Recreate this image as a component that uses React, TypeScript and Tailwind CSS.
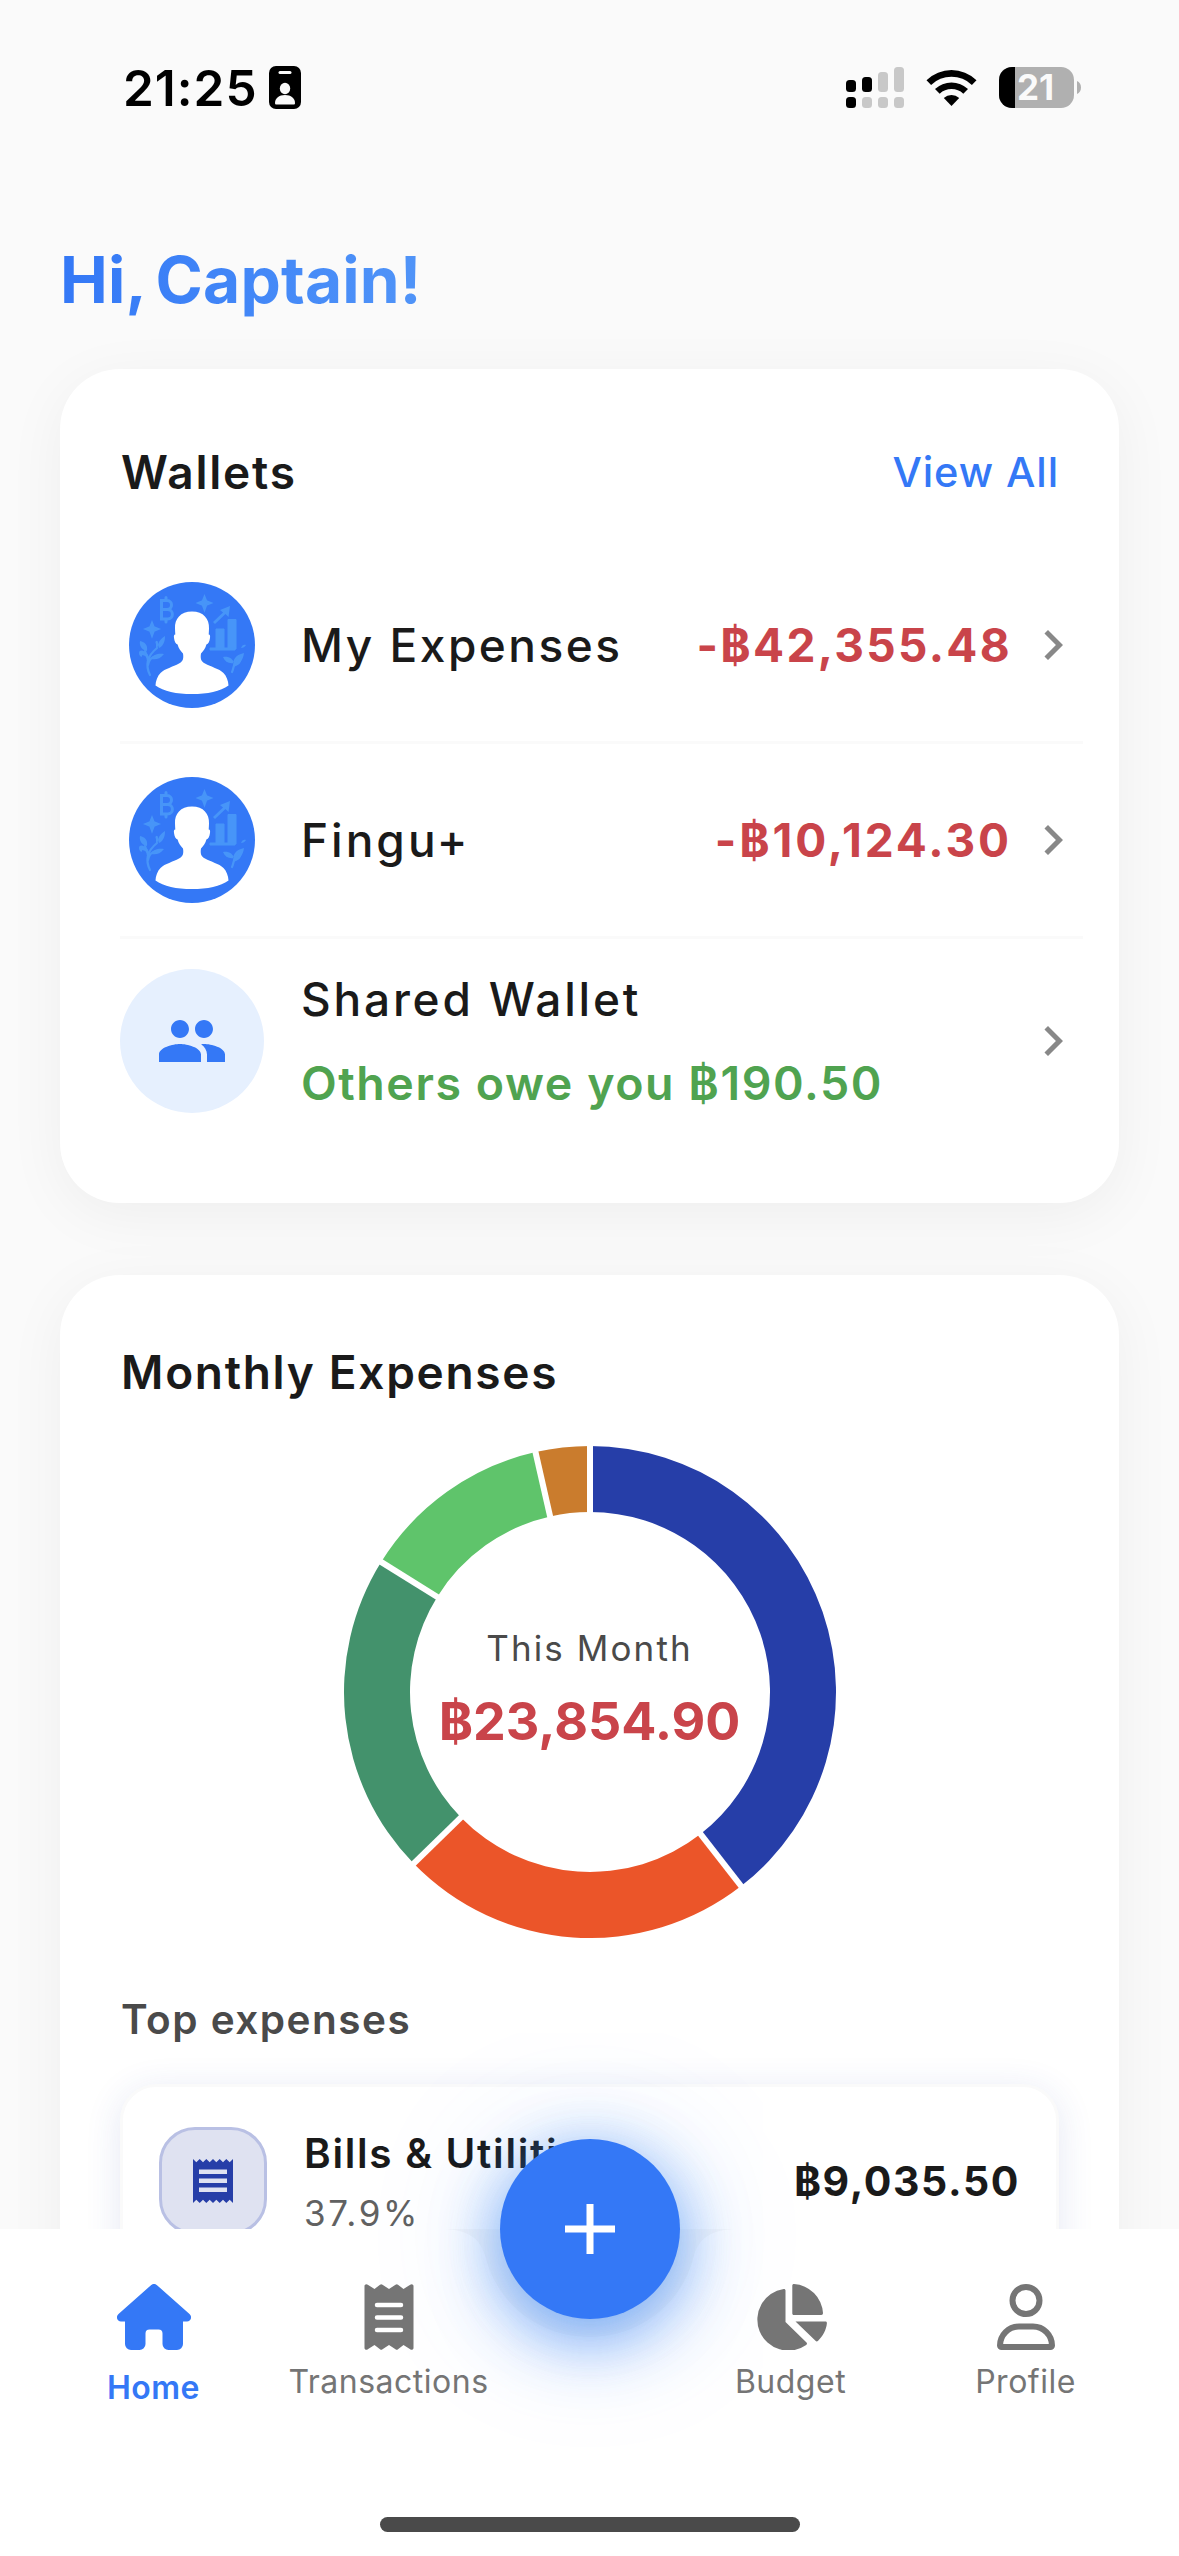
import clsx from "clsx";
import { MdChevronRight, MdPeople } from "react-icons/md";

const SEGMENTS = [
	{ color: "#263ea8", from: 0, to: 142.1 },
	{ color: "#eb5529", from: 142.1, to: 225.8 },
	{ color: "#43926c", from: 225.8, to: 301.9 },
	{ color: "#5fc46b", from: 301.9, to: 347.2 },
	{ color: "#ca7c2d", from: 347.2, to: 360 },
];

const WALLETS = [
	{ name: "My Expenses", amount: "-฿42,355.48", nameTracking: "tracking-[2.5px]", amountTracking: "tracking-[2.3px]" },
	{ name: "Fingu+", amount: "-฿10,124.30", nameTracking: "tracking-[3px]", amountTracking: "tracking-[2.9px]" },
];

// point on a circle of radius r, angle measured clockwise from the top
function point(r: number, deg: number) {
	const a = (deg * Math.PI) / 180;
	return `${246 + r * Math.sin(a)} ${246 - r * Math.cos(a)}`;
}

function segmentPath(from: number, to: number) {
	const large = to - from > 180 ? 1 : 0;
	return `M${point(246, from)} A246 246 0 ${large} 1 ${point(246, to)} L${point(180, to)} A180 180 0 ${large} 0 ${point(180, from)} Z`;
}

function Donut() {
	return (
		<svg className="h-[492px] w-[492px]" viewBox="0 0 492 492">
			{SEGMENTS.map((s) => (
				<path key={s.color} d={segmentPath(s.from, s.to)} fill={s.color} />
			))}
			{SEGMENTS.map((s) => (
				<path
					key={s.color}
					d={`M${point(176, s.from)} L${point(250, s.from)}`}
					stroke="#fff"
					strokeWidth="6"
				/>
			))}
		</svg>
	);
}

function StatusBar() {
	return (
		<div className="flex h-[177px] items-start justify-between pl-[123px] pr-[98px] pt-[66px]">
			<div className="flex items-start">
				<span className="-mt-2 w-[146px] whitespace-nowrap text-[49.5px] font-semibold leading-[60px] tracking-[1px] text-black">
					21:25
				</span>
				<svg className="h-[43px] w-8" viewBox="0 0 32 43">
					<rect width="32" height="43" rx="7" />
					<rect x="9.5" y="5" width="13" height="3" rx="1.5" fill="#fafafa" />
					<ellipse cx="16" cy="22.5" rx="5.2" ry="5.8" fill="#fafafa" />
					<path d="M6 37c0-4.500 4-8 10-8s10 3.500 10 8c0 1-.5 1.500-1.500 1.500h-17C6.500 38.500 6 38 6 37z" fill="#fafafa" />
				</svg>
			</div>
			<div className="flex items-start">
				<svg className="mr-[22px] mt-px h-[42px] w-[58px]" viewBox="0 0 58 42">
					<rect y="13" width="10" height="12" rx="3.5" />
					<rect x="16" y="10" width="10" height="15" rx="3.5" />
					<rect x="32" y="5" width="10" height="20" rx="3.5" fill="#c8c8c8" />
					<rect x="48" width="10" height="25" rx="3.5" fill="#c8c8c8" />
					<rect y="30" width="10" height="11" rx="3.5" />
					<rect x="16" y="30" width="10" height="11" rx="3.5" fill="#c8c8c8" />
					<rect x="32" y="30" width="10" height="11" rx="3.5" fill="#c8c8c8" />
					<rect x="48" y="30" width="10" height="11" rx="3.5" fill="#c8c8c8" />
				</svg>
				<svg className="mr-[22px] mt-[3px] h-[37px] w-[51px]" viewBox="0 0 51 37">
					<path d="M0.5 11.200a36 36 0 0 1 50 0l-4.600 4.700a29.300 29.300 0 0 0-40.800 0z" />
					<path d="M9 20a24 24 0 0 1 33 0l-4.700 4.700a17.300 17.300 0 0 0-23.600 0z" />
					<path d="M17.800 29a11.500 11.500 0 0 1 15.400 0L25.500 37z" />
				</svg>
				<div className="mt-px flex items-center">
					<div className="flex h-[41px] w-[75px] items-center overflow-hidden rounded-[13px] bg-[#b0b0b0]">
						<div className="h-full w-4 shrink-0 bg-black" />
						<span className="pl-[2px] text-[35px] font-bold leading-[41px] text-[#fafafa]">21</span>
					</div>
					<svg className="ml-[3px] h-[13px] w-1" viewBox="0 0 4 13" fill="#b0b0b0">
						<path d="M0 0c2.500 1 4 3.500 4 6.500S2.500 12 0 13z" />
					</svg>
				</div>
			</div>
		</div>
	);
}

function Avatar() {
	return (
		<svg className="h-[126px] w-[126px]" viewBox="0 0 126 126">
			<circle cx="63" cy="63" r="63" fill="#3478f6" />
			<g fill="#4795f8">
				<path d="M75.500 14l2 5 5 2-5 2-2 5.500-2-5.500-5-2 5-2z" stroke="#4795f8" strokeWidth="1.5" />
				<path d="M23 40l2 5 5 2-5 2-2 5.500-2-5.500-5-2 5-2z" stroke="#4795f8" strokeWidth="1.5" />
				<path d="M81 66h25v2H81zM87 47h8v20h-8zM99 37.500h8V67h-8z" stroke="#4795f8" strokeWidth="1" />
				<path d="M101 24l-10 4 3 2.500L84 40l2 2 10.500-10 3 3z" />
				<path d="M11 59c5 1 8 4 7 10-5-1-8-5-7-10zM36 54c-6 4-8 8-6 12 4-2 6-6 6-12zM35 72c-5-1-11 0-13 5 5 1 9 0 13-5zM10 71c0-4 6-3 9 2 1 2 1 4 0 6-1-4-3-6-6-6 1 3-3 2-3-2zM27 62c-2-3 2-5 2-1 1 3-1 5-2 5z" />
				<path d="M115 71c-9 2-12 7-10 14 6-3 9-7 10-14zM94 75c6-1 10 2 11 6-5 1-9-1-11-6zM112 66c1-3 3-4 5-3-1 2-3 3-5 3z" />
			</g>
			<g fill="none" stroke="#4795f8" strokeWidth="2.2" strokeLinecap="round">
				<path d="M21 93c-4-8-4-18 7-27M19 83c1-6 4-8 8-9M16 69c1 4 3 5 3 10M103 90c2-4 1-7 4-10l5-6M106 83c3-1 6-3 5-6" />
				<path
					d="M32.500 18.500h5.500c6 0 6 9 0 9h-5.500zM32.500 27.500h6c6.500 0 6.500 9.500 0 9.500h-6zM37 15.500v3M37 37v3"
					strokeWidth="3"
				/>
			</g>
			<path
				d="M63 29.500c-11.500 0-17.500 7.500-17 17 0 2 .2 4 .3 6-1.600 0-1.600 2-1.200 4 .5 3 1.500 5.500 3.500 6 1 4 3 6.500 5.400 9 .8 5 0 8-4 10-6 3.500-14 5-18.500 9.500-3 3-4.800 8-5 12.500 8 6 21 8.500 36.500 8.500s28.500-2.500 36.500-8.500c-.2-4.500-2-9.500-5-12.500C90 86.500 82 85 76 81.500c-4-2-4.800-5-4-10 2.400-2.500 4.400-5 5.400-9 2-.5 3-3 3.500-6 .4-2 .4-4-1.200-4 .1-2 .3-4 .3-6 .5-9.500-5.500-17-17-17z"
				fill="#fff"
			/>
		</svg>
	);
}

function Wallets() {
	return (
		<section className="h-[834px] rounded-[60px] bg-white pl-[60px] pr-9 shadow-[0_12px_60px_rgba(0,0,0,0.05)]">
			<div className="flex h-[180px] items-start justify-between pl-px pr-6 pt-[73px]">
				<h2 className="text-[46px] font-semibold leading-[60px] tracking-[1.8px] text-[#1a1a1a]">Wallets</h2>
				<button
					type="button"
					className="text-[41.5px] font-medium leading-[60px] tracking-[0.9px] text-[#3478f6]"
				>
					View All
				</button>
			</div>
			{WALLETS.map((wallet) => (
				<div key={wallet.name} className="flex h-[195px] items-center border-b-[3px] border-[#fafafa] pl-[9px]">
					<Avatar />
					<span
						className={clsx(
							"ml-[46px] text-[46px] font-medium leading-[60px] text-[#1a1a1a]",
							wallet.nameTracking,
						)}
					>
						{wallet.name}
					</span>
					<span
						className={clsx(
							"ml-auto text-[46px] font-bold leading-[60px] text-[#c9444a]",
							wallet.amountTracking,
						)}
					>
						{wallet.amount}
					</span>
					<MdChevronRight className="ml-[11px] h-[60px] w-[60px] text-[#888888]" />
				</div>
			))}
			<div className="flex h-[204px] items-center">
				<div className="flex h-36 w-36 items-center justify-center rounded-full bg-[#e6f0fe]">
					<MdPeople className="h-[72px] w-[72px] text-[#3478f6]" />
				</div>
				<div className="ml-[37px] flex flex-col">
					<span className="text-[46px] font-medium leading-[84px] tracking-[2.8px] text-[#1a1a1a]">
						Shared Wallet
					</span>
					<span className="text-[46.5px] font-semibold leading-[84px] tracking-[1.55px] text-[#50a350]">
						Others owe you ฿190.50
					</span>
				</div>
				<MdChevronRight className="ml-auto h-[60px] w-[60px] text-[#888888]" />
			</div>
		</section>
	);
}

function ReceiptIcon() {
	return (
		<svg className="h-11 w-10" viewBox="0 0 40 44">
			<path
				d="M0 0l3.300 3.300L6.700 0 10 3.300 13.300 0l3.400 3.300L20 0l3.300 3.300L26.700 0 30 3.300 33.300 0l3.400 3.300L40 0v44l-3.300-3.300-3.400 3.300-3.300-3.300-3.300 3.300-3.400-3.300L20 44l-3.300-3.300-3.400 3.300L10 40.700 6.700 44l-3.400-3.300L0 44z"
				fill="#263ea8"
			/>
			<path d="M6 10.500h28v4.500H6zM6 19.500h28V24H6zM6 28.500h28V33H6z" fill="#dfe2f1" />
		</svg>
	);
}

function MonthlyExpenses() {
	return (
		<section className="h-[1200px] rounded-t-[60px] bg-white px-[60px] pt-[67px] shadow-[0_12px_60px_rgba(0,0,0,0.05)]">
			<h2 className="pl-px text-[46px] font-semibold leading-[60px] tracking-[1.7px] text-[#1a1a1a]">
				Monthly Expenses
			</h2>
			<div className="mt-11 grid place-items-center">
				<div className="col-start-1 row-start-1">
					<Donut />
				</div>
				<div className="col-start-1 row-start-1 flex flex-col items-center pb-2 text-center">
					<span className="text-[35px] leading-[60px] tracking-[2.1px] text-[#4a4a4a]">This Month</span>
					<span className="mt-2 text-[52px] font-bold leading-[72px] text-[#c9444a]">฿23,854.90</span>
				</div>
			</div>
			<h3 className="mt-[52px] pl-px text-[40.5px] font-semibold leading-[60px] tracking-[1.5px] text-[#4a4a4a]">
				Top expenses
			</h3>
			<div className="mt-[34px] flex h-[240px] items-start rounded-[36px] border-[3px] border-[#fafafa] bg-white px-9 pt-10 shadow-[0_6px_36px_rgba(38,62,168,0.12)]">
				<div className="flex h-[108px] w-[108px] items-center justify-center rounded-[36px] border-[3px] border-[#b9c0e4] bg-[#dfe2f1]">
					<ReceiptIcon />
				</div>
				<div className="ml-[37px] flex flex-col">
					<span className="text-[40.5px] font-semibold leading-[54px] tracking-[1.7px] text-[#1a1a1a]">
						Bills &amp; Utilities
					</span>
					<span className="mt-[5px] text-[35px] leading-[54px] tracking-[2.6px] text-[#616161]">37.9%</span>
				</div>
				<span className="ml-auto mt-[27px] text-[41px] font-bold leading-[54px] tracking-[1.6px] text-[#1a1a1a]">
					฿9,035.50
				</span>
			</div>
		</section>
	);
}

function BottomNav() {
	return (
		<nav className="absolute bottom-0 left-0 flex h-[327px] w-full flex-col justify-between pb-6">
			{/* bar background with the notch for the add button */}
			<svg className="absolute inset-0 h-[327px] w-[1179px]" viewBox="0 0 1179 327">
				<path d="M420 0h339v120H420z" fill="#f9f9f9" />
				<path
					d="M0 0h440c28 0 41 9 46 30 13 47 55 78 103.500 78s90.500-31 103.500-78c5-21 18-30 46-30h440v327H0z"
					fill="#fff"
				/>
			</svg>
			<button
				type="button"
				className="absolute -top-[90px] left-[499.5px] flex h-[180px] w-[180px] items-center justify-center rounded-full bg-[#3478f6] shadow-[0_24px_72px_rgba(52,120,246,0.4),0_12px_60px_rgba(52,145,240,0.42),0_6px_150px_rgba(52,120,246,0.16)]"
			>
				<svg className="h-[50px] w-[50px]" viewBox="0 0 50 50" stroke="#fff" strokeWidth="7">
					<path d="M25 0v50M0 25h50" />
				</svg>
			</button>
			<div className="relative flex px-9 pt-[55px] text-[32px] leading-[42px] tracking-[0.5px] text-[#757575]">
				<div className="flex w-[235px] flex-col items-center font-semibold text-[#3478f6]">
					<svg className="h-[66px] w-[74px]" viewBox="0 0 74 66" fill="currentColor">
						<path d="M34 1.200a4.500 4.500 0 0 1 6 0L72.500 30c3.200 3 1.200 7.500-2.500 7.500h-4V60a6 6 0 0 1-6 6H51.500a6 6 0 0 1-6-6V49.500a4 4 0 0 0-4-4h-9a4 4 0 0 0-4 4V60a6 6 0 0 1-6 6H14a6 6 0 0 1-6-6V37.500H4C.3 37.500-1.700 33 1.500 30z" />
					</svg>
					<span className="mt-[17px]">Home</span>
				</div>
				<div className="flex w-[235px] flex-col items-center">
					<svg className="h-[66px] w-[50px]" viewBox="0 0 50 66">
						<path
							d="M.5 2c0-1.700 2-2.500 3.300-1.300L10.500 5l5.500-4.300a2 2 0 0 1 2.500 0L25 5l6.500-4.300a2 2 0 0 1 2.500 0L39.500 5l6.700-4.300C47.500-.5 49.500.3 49.500 2v62c0 1.700-2 2.500-3.300 1.300L39.500 61 34 65.300a2 2 0 0 1-2.500 0L25 61l-6.500 4.300a2 2 0 0 1-2.500 0L10.500 61l-6.700 4.300C2.500 66.500.5 65.700.5 64z"
							fill="currentColor"
						/>
						<path d="M13 21h24M13 33.500h24M13 46h24" stroke="#fff" strokeWidth="4.5" strokeLinecap="round" />
					</svg>
					<span className="mt-[11px]">Transactions</span>
				</div>
				<div className="ml-[167px] flex w-[235px] flex-col items-center">
					<svg className="ml-[3px] h-[66px] w-[70px]" viewBox="0 0 70 66" fill="currentColor">
						<path d="M35.300 1.500c0-1 .8-1.500 1.700-1.500a31 31 0 0 1 29 29c0 1-.6 2-1.700 2h-27.500c-1 0-1.500-.7-1.500-1.500zM28.500 6.500V38l21 20.500c.8.800.6 1.800-.3 2.500A31 31 0 1 1 26.700 5c1-.1 1.800.5 1.800 1.500zM38.500 37.500h30c1 0 1.500.8 1.400 1.800-.6 6.500-4 13-9 17.600-.8.7-1.700.6-2.400-.1z" />
					</svg>
					<span className="mt-[11px]">Budget</span>
				</div>
				<div className="flex w-[235px] flex-col items-center">
					<svg className="h-[66px] w-[58px]" viewBox="0 0 58 66" fill="none" stroke="currentColor" strokeWidth="6">
						<circle cx="29" cy="16.5" r="13.5" />
						<path d="M3 61.500C3 51 11.500 42.500 22 42.500h14c10.500 0 19 8.500 19 19 0 .8-.7 1.500-1.500 1.500h-49C3.700 63 3 62.300 3 61.500z" />
					</svg>
					<span className="mt-[11px]">Profile</span>
				</div>
			</div>
			<div className="relative h-[15px] w-[420px] self-center rounded-full bg-[#4a4a4a]" />
		</nav>
	);
}

export default function App() {
	return (
		<div className="relative h-[2556px] w-[1179px] overflow-hidden bg-[#fafafa] font-['Inter',sans-serif]">
			<StatusBar />
			<main className="px-[60px]">
				<h1 className="mb-[49px] w-fit bg-linear-to-r from-[#3478f6] to-[#5094f8] bg-clip-text pt-[62px] text-[64px] font-bold leading-[81px] tracking-[0.2px] text-transparent [word-spacing:-5px]">
					Hi, Captain!
				</h1>
				<div className="flex flex-col gap-[72px]">
					<Wallets />
					<MonthlyExpenses />
				</div>
			</main>
			<BottomNav />
		</div>
	);
}
